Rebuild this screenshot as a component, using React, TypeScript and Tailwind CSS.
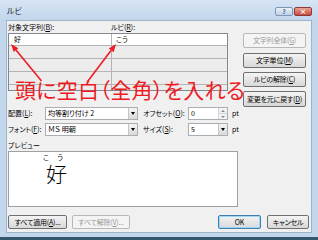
import clsx from "clsx";
import type { ReactNode } from "react";

function Btn({
  children,
  disabled,
  primary,
  className,
}: {
  children: ReactNode;
  disabled?: boolean;
  primary?: boolean;
  className?: string;
}) {
  return (
    <div
      className={clsx(
        "flex shrink-0 items-center justify-center whitespace-nowrap rounded-[2px] border text-[7px] leading-none tracking-[-0.2px]",
        disabled
          ? "border-[#b8b8b8] bg-[#f4f4f4] text-[#9a9a9a]"
          : primary
            ? "border-[#3c7fb1] bg-gradient-to-b from-[#f2f2f2] to-[#d9d9d9] text-black shadow-[inset_0_0_0_1px_#9fd6f5]"
            : "border-[#707070] bg-gradient-to-b from-[#f4f4f4] to-[#d8d8d8] text-black",
        className
      )}
    >
      {children}
    </div>
  );
}

function DropArrow() {
  return (
    <div className="flex h-full w-[9px] shrink-0 items-center justify-center border-l border-[#c4c4c4] bg-gradient-to-b from-[#f4f4f4] to-[#dadada]">
      <div className="h-0 w-0 border-x-[2.5px] border-t-[3px] border-x-transparent border-t-black" />
    </div>
  );
}

function Select({ value, className }: { value: string; className?: string }) {
  return (
    <div className={clsx("flex h-[13px] shrink-0 items-center border border-[#abadb3] bg-white", className)}>
      <span className="min-w-0 flex-1 whitespace-nowrap pl-[2px] text-[7px] leading-[11px]">{value}</span>
      <DropArrow />
    </div>
  );
}

function Spin({ value }: { value: string }) {
  return (
    <div className="flex h-[13px] w-[40px] shrink-0 items-center border border-[#abadb3] bg-white">
      <span className="flex-1 pl-[2px] text-[7px] leading-none">{value}</span>
      <div className="flex h-full w-[9px] flex-col border-l border-[#d4d4d4] bg-[#f2f2f2]">
        <div className="flex flex-1 items-center justify-center border-b border-[#d4d4d4]">
          <div className="h-0 w-0 border-x-[2px] border-b-[2px] border-x-transparent border-b-[#7a8ea6]" />
        </div>
        <div className="flex flex-1 items-center justify-center">
          <div className="h-0 w-0 border-x-[2px] border-t-[2px] border-x-transparent border-t-[#7a8ea6]" />
        </div>
      </div>
    </div>
  );
}

const rows = [
  ["好", "こう"],
  ["", ""],
  ["", ""],
  ["", ""],
  ["", ""],
];

export default function App() {
  return (
    <div className="relative flex h-[240px] w-[318px] flex-col overflow-hidden bg-[#c2d6ec] font-['Noto_Sans_CJK_JP',sans-serif] text-black [font-feature-settings:'palt']">
      {/* title bar */}
      <div className="flex h-[20px] shrink-0 items-start bg-gradient-to-b from-[#d6e4f4] to-[#c2d6ec] pl-[7px]">
        <span className="mt-[6px] text-[8px] leading-[10px] text-[#1b2633]">ルビ</span>
        <div className="ml-auto mr-[6px] mt-[7px] flex gap-[1px]">
          <div className="flex h-[9px] w-[18px] items-center justify-center rounded-[2px] border border-[#7c97b6] bg-gradient-to-b from-[#e9f0f8] to-[#bfd1e6] text-[6px] font-bold leading-none text-[#3d5570]">
            ?
          </div>
          <div className="flex h-[9px] w-[18px] items-center justify-center rounded-[2px] border border-[#8b3b36] bg-gradient-to-b from-[#e9a293] to-[#c5463c] text-[7px] font-bold leading-none text-white">
            ×
          </div>
        </div>
      </div>

      {/* client area */}
      <div className="mx-[6px] flex h-[213px] shrink-0 flex-col border border-[#9fb3ca] bg-[#f0f0f0] px-[1px] pr-[2px] pt-[1px]">
        {/* top block */}
        <div className="flex h-[85px] shrink-0">
          <div className="flex w-[220px] flex-col">
            <div className="flex h-[10px] items-center text-[7px] leading-none">
              <span className="w-[103px]">
                対象文字列(<u>B</u>):
              </span>
              <span>
                ルビ(<u>R</u>):
              </span>
            </div>
            <div className="mt-[1px] h-[58px] overflow-hidden border border-[#828790] bg-[#ececec]">
              {rows.map((r, i) => (
                <div
                  key={i}
                  className={clsx("flex border-b border-[#b4b4b4]", i === 0 ? "h-[12px] bg-white" : "h-[13px]")}
                >
                  <div className="flex w-[103px] items-center border-r border-[#b4b4b4] pl-[5px] text-[7px] leading-none">
                    {r[0]}
                  </div>
                  <div className="flex flex-1 items-center pl-[4px] text-[7px] leading-none">{r[1]}</div>
                </div>
              ))}
            </div>
          </div>
          <div className="ml-[15px] flex w-[63px] flex-col">
            <Btn disabled className="mt-[11px] h-[15px]">
              文字列全体(<u>G</u>)
            </Btn>
            <Btn className="mt-[5px] h-[15px]">
              文字単位(<u>M</u>)
            </Btn>
            <Btn className="mt-[4px] h-[15px]">
              ルビの解除(<u>C</u>)
            </Btn>
            <Btn className="mt-[4px] h-[16px]">
              変更を元に戻す(<u>D</u>)
            </Btn>
          </div>
        </div>

        {/* 配置 / オフセット */}
        <div className="flex h-[13px] shrink-0 items-center text-[7px] leading-none">
          <span className="w-[37px]">
            配置(<u>L</u>):
          </span>
          <Select value="均等割り付け 2" className="w-[93px]" />
          <span className="ml-[5px] w-[45px] whitespace-nowrap">
            オフセット(<u>O</u>):
          </span>
          <Spin value="0" />
          <span className="ml-[4px]">pt</span>
        </div>

        {/* フォント / サイズ */}
        <div className="mt-[3px] flex h-[13px] shrink-0 items-center text-[7px] leading-none">
          <span className="w-[37px] whitespace-nowrap">
            フォント(<u>F</u>):
          </span>
          <Select value="ＭＳ 明朝" className="w-[93px]" />
          <span className="ml-[5px] w-[45px] whitespace-nowrap">
            サイズ(<u>S</u>):
          </span>
          <Select value="5" className="w-[40px]" />
          <span className="ml-[4px]">pt</span>
        </div>

        <div className="mt-[4px] flex h-[10px] shrink-0 items-center text-[7px] leading-none">プレビュー</div>

        {/* preview */}
        <div className="mt-[1px] flex h-[56px] w-[230px] shrink-0 flex-col border border-[#a0a0a0] bg-white">
          <div className="ml-[34px] mt-[1px] flex h-[9px] w-[20px] items-center justify-between text-[7px] leading-[9px]">
            <span>こ</span>
            <span>う</span>
          </div>
          <div className="ml-[37px] mt-[1px] h-[21px] text-[21px] font-light leading-[21px]">好</div>
        </div>

        {/* bottom buttons */}
        <div className="mt-[8px] flex h-[14px] shrink-0">
          <Btn className="h-[14px] w-[59px]">
            すべて適用(<u>A</u>)...
          </Btn>
          <Btn disabled className="ml-[5px] h-[14px] w-[58px]">
            すべて解除(<u>V</u>)...
          </Btn>
          <Btn primary className="ml-auto h-[14px] w-[43px]">
            OK
          </Btn>
          <Btn className="ml-[6px] h-[14px] w-[42px]">キャンセル</Btn>
        </div>
      </div>

      <div className="mt-[4px] h-[3px] shrink-0 bg-[#35576e]" />

      {/* annotation overlay */}
      <svg className="pointer-events-none absolute left-0 top-0" width="318" height="240" viewBox="0 0 318 240">
        <line x1="41.5" y1="81" x2="16" y2="50" stroke="#ed1c24" strokeWidth="1.6" />
        <polygon points="11,44 18.4,48.3 13.7,52.1" fill="#ed1c24" />
        <line x1="88" y1="81" x2="111" y2="50.5" stroke="#ed1c24" strokeWidth="1.6" />
        <polygon points="116,44 113.6,52.2 108.8,48.6" fill="#ed1c24" />
      </svg>
      <div className="pointer-events-none absolute left-[15px] top-[79px] whitespace-nowrap text-[21px] leading-[21px] tracking-[0.3px] text-[#ed1c24]">
        頭に空白（全角）を入れる
      </div>
    </div>
  );
}
